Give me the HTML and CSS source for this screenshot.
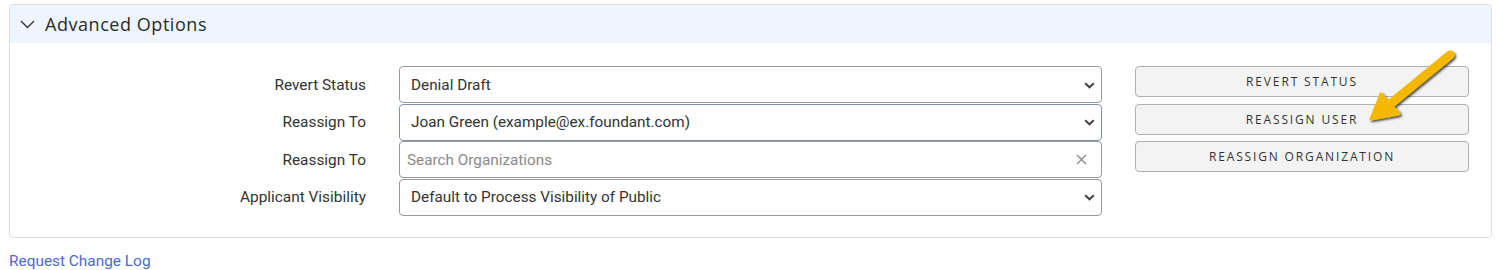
FILE: index.html
```html
<!DOCTYPE html>
<html lang="en">
<head>
<meta charset="utf-8">
<title>Advanced Options</title>
<link rel="stylesheet" href="styles.css">
</head>
<body>
<div class="page">
  <section class="panel">
    <header class="panel-head">
      <svg class="chev" width="15" height="9" viewBox="0 0 15 9"><path d="M1 1 L7.5 7.5 L14 1" fill="none" stroke="#333" stroke-width="1.4"/></svg>
      <span class="panel-title">Advanced Options</span>
    </header>
    <div class="panel-body">
      <div class="fields">
        <div class="row">
          <label class="lbl">Revert Status</label>
          <div class="ctl">
            <span class="val">Denial Draft</span>
            <svg class="caret" width="11" height="7" viewBox="0 0 11 7"><path d="M1.2 1.2 L5.5 5.3 L9.8 1.2" fill="none" stroke="#444" stroke-width="2"/></svg>
          </div>
        </div>
        <div class="row">
          <label class="lbl">Reassign To</label>
          <div class="ctl focus">
            <span class="val">Joan Green (example@ex.foundant.com)</span>
            <svg class="caret" width="11" height="7" viewBox="0 0 11 7"><path d="M1.2 1.2 L5.5 5.3 L9.8 1.2" fill="none" stroke="#444" stroke-width="2"/></svg>
          </div>
        </div>
        <div class="row">
          <label class="lbl">Reassign To</label>
          <div class="ctl">
            <span class="val ph">Search Organizations</span>
            <svg class="clear" width="11" height="11" viewBox="0 0 11 11"><path d="M1 1 L10 10 M10 1 L1 10" fill="none" stroke="#888" stroke-width="1.3"/></svg>
          </div>
        </div>
        <div class="row">
          <label class="lbl">Applicant Visibility</label>
          <div class="ctl">
            <span class="val">Default to Process Visibility of Public</span>
            <svg class="caret" width="11" height="7" viewBox="0 0 11 7"><path d="M1.2 1.2 L5.5 5.3 L9.8 1.2" fill="none" stroke="#444" stroke-width="2"/></svg>
          </div>
        </div>
      </div>
      <div class="actions">
        <button class="btn">REVERT STATUS</button>
        <button class="btn">REASSIGN USER</button>
        <button class="btn">REASSIGN ORGANIZATION</button>
      </div>
    </div>
    <svg class="arrow" width="110" height="90" viewBox="0 0 110 90">
      <defs>
        <filter id="sh" x="-20%" y="-20%" width="140%" height="140%">
          <feDropShadow dx="1.5" dy="1.5" stdDeviation="1.2" flood-color="#000" flood-opacity="0.75"/>
        </filter>
      </defs>
      <g filter="url(#sh)">
        <path d="M88 8 L26 59" stroke="#f5b800" stroke-width="9" stroke-linecap="round" fill="none"/>
        <path d="M9 72 L19 47 L37 67 Z" fill="#f5b800" stroke="#f5b800" stroke-width="3" stroke-linejoin="round"/>
      </g>
    </svg>
  </section>
  <a class="log-link" href="#">Request Change Log</a>
</div>
</body>
</html>
```

FILE: styles.css
```css
html, body {
  margin: 0;
  padding: 0;
  background: #fff;
}
.page {
  padding: 4px 15px 0 9px;
  font-family: Roboto, "Liberation Sans", Arial, sans-serif;
  color: #333;
}
.panel {
  position: relative;
  border: 1px solid #dcdcdc;
  border-radius: 4px;
  overflow: hidden;
}
.panel-head {
  height: 38px;
  background: #eef5fe;
  display: flex;
  align-items: center;
  padding-left: 10px;
  gap: 10px;
}
.chev {
  display: block;
  margin-top: 1px;
}
.panel-title {
  font-family: "Open Sans", "DejaVu Sans", sans-serif;
  font-size: 18px;
  color: #2b2b2b;
  letter-spacing: 0.55px;
}
.panel-body {
  display: flex;
  padding: 23px 22px 21px 0;
  gap: 33px;
}
.fields {
  display: flex;
  flex-direction: column;
}
.row {
  display: flex;
  align-items: center;
  height: 37.5px;
  gap: 33px;
}
.lbl {
  width: 356px;
  text-align: right;
  font-size: 15.4px;
  color: #333;
}
.ctl {
  width: 703px;
  height: 37px;
  border: 1px solid #999;
  border-radius: 4px;
  display: flex;
  align-items: center;
  justify-content: space-between;
  padding: 0 6px 0 11px;
  box-sizing: border-box;
  background: #fff;
}
.ctl.focus {
  border-color: #7d93ad;
}
.val {
  font-size: 15.3px;
  color: #333;
}
.val.ph {
  color: #8a8a8a;
  margin-left: -4px;
}
.caret {
  display: block;
  margin-top: 1px;
}
.clear {
  display: block;
  margin-right: 8px;
}
.actions {
  display: flex;
  flex-direction: column;
  gap: 6.5px;
  width: 334px;
}
.btn {
  height: 31px;
  border: 1px solid #b0b0b0;
  border-radius: 4px;
  background: #f3f3f3;
  font-family: "Open Sans", "DejaVu Sans", sans-serif;
  font-size: 12px;
  letter-spacing: 1.85px;
  color: #333;
  padding: 0;
}
.arrow {
  position: absolute;
  left: 1352px;
  top: 42px;
  pointer-events: none;
}
.log-link {
  display: inline-block;
  margin-top: 14px;
  font-size: 15.4px;
  color: #4a6ad0;
  text-decoration: none;
}
```
